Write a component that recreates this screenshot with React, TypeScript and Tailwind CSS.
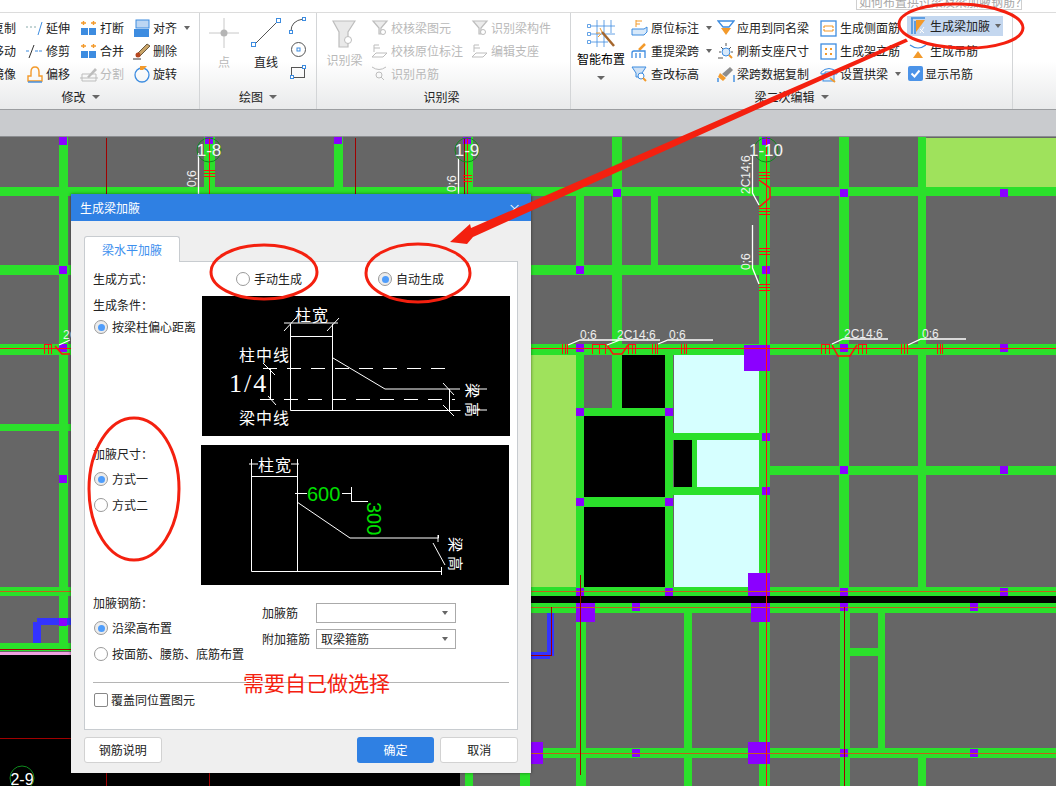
import type { ReactNode } from "react";

const BLUE = "#3d8ce0";
const ORANGE = "#f39a2b";
const GREY = "#bdbdbd";

function Ic({ w = 18, h = 18, children }: { w?: number; h?: number; children: ReactNode }) {
  return (
    <svg width={w} height={h} viewBox={`0 0 ${w} ${h}`} fill="none" className="shrink-0">
      {children}
    </svg>
  );
}

function Caret() {
  return <span className="ml-[5px] inline-block h-0 w-0 border-x-[3px] border-t-[4px] border-x-transparent border-t-[#666]" />;
}

function Item({ icon, label, off, caret, w }: { icon?: ReactNode; label: string; off?: boolean; caret?: boolean; w?: string }) {
  return (
    <div className={`flex h-[23px] items-center gap-[2px] whitespace-nowrap ${w ?? ""} ${off ? "text-[#b9b9b9]" : "text-[#222]"}`}>
      {icon}
      <span>{label}</span>
      {caret && <Caret />}
    </div>
  );
}

const icons = {
  copy: <Ic><rect x="2" y="2" width="10" height="10" stroke={BLUE} /></Ic>,
  extend: (
    <Ic>
      <path d="M0 8H11" stroke="#8aa" strokeDasharray="2 2" />
      <path d="M12 16L16 3" stroke={BLUE} />
    </Ic>
  ),
  trim: (
    <Ic>
      <path d="M0 9H4M9 9H17" stroke={BLUE} strokeDasharray="3 1" />
      <path d="M3 16L8 3" stroke="#333" />
    </Ic>
  ),
  offset: (
    <Ic>
      <path d="M2 16V11H5V7Q5 2 9 2Q13 2 13 7V11H16V16Z" stroke={ORANGE} strokeWidth="1.4" />
      <path d="M2 17H16" stroke={BLUE} strokeWidth="1.4" />
    </Ic>
  ),
  split: (
    <Ic>
      <path d="M2 16V9H16V16ZM0 13H18" stroke={GREY} />
      <path d="M7 12L15 3L17 5L9 13Z" fill={GREY} />
    </Ic>
  ),
  brk: (
    <Ic>
      <path d="M1 4H6M3.5 2V6M11 4H16M13.500 2V6" stroke={ORANGE} strokeWidth="1.4" />
      <rect x="1" y="9" width="7" height="7" fill={BLUE} />
      <rect x="9" y="9" width="7" height="7" fill={BLUE} />
    </Ic>
  ),
  merge: (
    <Ic>
      <path d="M1 4H6M3.5 2V6M11 4H16M13.500 2V6" stroke={ORANGE} strokeWidth="1.4" />
      <rect x="1" y="9" width="15" height="7" fill={BLUE} />
      <path d="M8.500 9V16" stroke="#fff" />
    </Ic>
  ),
  align: (
    <Ic>
      <rect x="3" y="1" width="13" height="8" fill="#bcd6f3" stroke={BLUE} />
      <rect x="1" y="10" width="15" height="8" fill={BLUE} />
    </Ic>
  ),
  del: (
    <Ic>
      <path d="M4 12L14 2L17 4L7 14Z" fill="#c9a468" stroke="#6b5a40" />
      <circle cx="5" cy="13" r="2.500" fill="#b5461f" />
      <path d="M0 17H8" stroke="#333" />
    </Ic>
  ),
  rotate: (
    <Ic>
      <circle cx="9" cy="10" r="7" stroke={BLUE} strokeWidth="1.3" />
      <path d="M7 1H14L10 5H7Z" fill={ORANGE} />
    </Ic>
  ),
  check: (
    <Ic w={18} h={16}>
      <path d="M2 1H16L10 8V14H8V8Z" fill="#ececec" stroke={GREY} strokeWidth="1.200" />
      <circle cx="12" cy="12" r="2.500" fill="#fff" stroke={GREY} />
    </Ic>
  ),
  orig: (
    <Ic>
      <path d="M1 15H12L16 11H5ZM3 10V3H8" stroke={GREY} />
      <path d="M3 6H9" stroke={GREY} />
    </Ic>
  ),
  hook: (
    <Ic>
      <path d="M1 2Q8 7 15 2" stroke={GREY} />
      <circle cx="8" cy="10" r="3" stroke={GREY} />
      <path d="M10 12L13 15" stroke={GREY} />
    </Ic>
  ),
  tag: (
    <Ic>
      <path d="M5 1V8M5 2H11M5 5H9" stroke={ORANGE} />
      <path d="M1 10H13L16 8V13L13 16H1Z" fill="#d8e9fa" stroke={BLUE} />
    </Ic>
  ),
  relift: (
    <Ic>
      <path d="M8 8L14 2" stroke={ORANGE} strokeWidth="2.500" />
      <path d="M1 16V11Q1 9 3 9H14V16M5 11V16M9 11V16" stroke={BLUE} strokeWidth="1.300" />
    </Ic>
  ),
  elev: (
    <Ic>
      <path d="M1 2H15L11 8V12H5V8Z" fill="#cfe2f6" stroke={BLUE} />
      <circle cx="10" cy="11" r="3" fill="#fff" stroke={BLUE} />
      <path d="M12 13L15 16" stroke={ORANGE} strokeWidth="2" />
    </Ic>
  ),
  apply: (
    <Ic>
      <path d="M1 2H17L12 8H6Z" stroke={BLUE} strokeWidth="1.300" />
      <path d="M4 9H14L9 16Z" fill={ORANGE} />
    </Ic>
  ),
  refresh: (
    <Ic>
      <circle cx="9" cy="10" r="4" fill="#d8e9fa" stroke={BLUE} />
      <path d="M9 1V4M2 10H4M14 10H16M4 5L6 7M14 5L12 7M1 16H6" stroke="#555" />
      <path d="M12 13L15 16" stroke={ORANGE} strokeWidth="2" />
    </Ic>
  ),
  span: (
    <Ic>
      <path d="M5 9L13 2L16 5L9 12Z" fill="#8d8d8d" />
      <path d="M3 8L9 13L6 16L1 12Z" fill={ORANGE} />
      <path d="M1 17V13M17 17V10" stroke={BLUE} strokeWidth="1.400" />
    </Ic>
  ),
  side: (
    <Ic>
      <rect x="1" y="2" width="15" height="15" stroke={BLUE} strokeWidth="1.300" />
      <path d="M4 7H13M4 12H13M4 7V9M13 7V9M4 10V12M13 10V12" stroke={ORANGE} strokeWidth="1.200" />
    </Ic>
  ),
  erect: (
    <Ic>
      <rect x="1" y="2" width="15" height="15" stroke={BLUE} strokeWidth="1.300" />
      <path d="M5 6H7V8H5ZM10 6H12V8H10ZM5 11H7V13H5ZM10 11H12V13H10Z" fill={ORANGE} />
    </Ic>
  ),
  arch: (
    <Ic>
      <path d="M1 7Q9 0 17 7V9H13V7H5V9H1Z" stroke={BLUE} />
      <rect x="3" y="9" width="11" height="7" fill="#d8e9fa" stroke={BLUE} />
      <path d="M10 13L15 17" stroke={ORANGE} strokeWidth="2" />
    </Ic>
  ),
  haunch: (
    <Ic w={20} h={18}>
      <path d="M1 1H15M2 1V17M5 4V17" stroke={BLUE} strokeWidth="1.500" />
      <path d="M6 3H15L6 15Z" fill={ORANGE} />
      <path d="M10 12L14 16M14 10L10 16" stroke="#fff" strokeWidth="1" />
    </Ic>
  ),
  hanger: (
    <Ic w={20} h={18}>
      <path d="M2 3Q10 9 18 3" stroke={BLUE} strokeWidth="1.200" />
      <path d="M10 9L15 16H5Z" fill={ORANGE} />
    </Ic>
  ),
  tick: (
    <span className="flex h-[15px] w-[15px] shrink-0 items-center justify-center rounded-[2px] bg-[#4b93e8]">
      <svg width="11" height="11" viewBox="0 0 11 11" fill="none">
        <path d="M1.500 5.500L4.500 8.500L9.500 2.500" stroke="#fff" strokeWidth="2" />
      </svg>
    </span>
  ),
};

function Group({ title, caret, w, labelPad, children }: { title: string; caret?: boolean; w: string; labelPad?: string; children: ReactNode }) {
  return (
    <div className={`flex shrink-0 flex-col border-r border-[#d3d5d7] ${w}`}>
      <div className="flex h-[72px] pt-[3px]">{children}</div>
      <div className={`flex h-[22px] items-center justify-center pt-[2px] text-[#222] ${labelPad ?? ""}`}>
        {title}
        {caret && <span className="ml-[6px] h-0 w-0 border-x-[4px] border-t-[4px] border-x-transparent border-t-[#666]" />}
      </div>
    </div>
  );
}

function Ribbon() {
  return (
    <div className="flex h-[97px] shrink-0 overflow-hidden border-b border-[#9b9da0] bg-gradient-to-b from-white from-50% to-[#e9eaeb]">
      <Group title="修改" caret w="w-[200px]" labelPad="pr-[38px]">
        <div className="ml-[-31px] flex w-[57px] flex-col pl-[3px]">
          <Item icon={icons.copy} label="复制" />
          <Item icon={icons.copy} label="移动" />
          <Item icon={icons.copy} label="镜像" />
        </div>
        <div className="flex w-[54px] flex-col">
          <Item icon={icons.extend} label="延伸" />
          <Item icon={icons.trim} label="修剪" />
          <Item icon={icons.offset} label="偏移" />
        </div>
        <div className="flex w-[53px] flex-col">
          <Item icon={icons.brk} label="打断" />
          <Item icon={icons.merge} label="合并" />
          <Item icon={icons.split} label="分割" off />
        </div>
        <div className="flex w-[65px] flex-col">
          <Item icon={icons.align} label="对齐" caret />
          <Item icon={icons.del} label="删除" />
          <Item icon={icons.rotate} label="旋转" />
        </div>
      </Group>
      <Group title="绘图" caret w="w-[117px]">
        <div className="flex w-[48px] flex-col items-center pt-[2px] text-[#b9b9b9]">
          <Ic w={30} h={30}>
            <path d="M15 0V30M0 15H30" stroke="#c8c8c8" />
            <circle cx="15" cy="15" r="3.500" fill="#b5b5b5" />
          </Ic>
          <span className="mt-[5px]">点</span>
        </div>
        <div className="flex w-[36px] flex-col items-center pt-[2px] text-[#222]">
          <Ic w={30} h={30}>
            <path d="M3 27L27 3" stroke="#555" />
            <rect x="0.500" y="24.500" width="4" height="4" fill="#fff" stroke={BLUE} />
            <rect x="25.500" y="0.500" width="4" height="4" fill="#fff" stroke={BLUE} />
          </Ic>
          <span className="mt-[5px]">直线</span>
        </div>
        <div className="flex flex-1 flex-col items-center gap-[7px] pr-[4px] pt-[1px]">
          <Ic w={18} h={17}>
            <path d="M2 14Q2 4 14 2" stroke="#555" />
            <rect x="0.500" y="13.500" width="3" height="3" fill="#fff" stroke={BLUE} />
            <rect x="13.500" y="0.500" width="3" height="3" fill="#fff" stroke={BLUE} />
          </Ic>
          <Ic w={17} h={17}>
            <circle cx="8.500" cy="8.500" r="7" stroke="#555" />
            <rect x="7" y="7" width="3" height="3" stroke={BLUE} />
          </Ic>
          <Ic w={16} h={14}>
            <rect x="1.500" y="2.500" width="13" height="10" stroke="#555" />
            <rect x="0.500" y="10.500" width="3" height="3" fill="#fff" stroke={BLUE} />
            <rect x="12.500" y="0.500" width="3" height="3" fill="#fff" stroke={BLUE} />
          </Ic>
        </div>
      </Group>
      <Group title="识别梁" w="w-[254px]" labelPad="pr-[4px]">
        <div className="flex w-[54px] flex-col items-center pt-[4px] text-[#b9b9b9]">
          <Ic w={24} h={28}>
            <path d="M1 1H23L16 12V27H7V12Z" fill="#e9e9e9" stroke={GREY} strokeWidth="1.200" />
            <circle cx="16" cy="20" r="3.500" fill="#fff" stroke={GREY} />
          </Ic>
          <span className="mt-[3px] pl-[1px]">识别梁</span>
        </div>
        <div className="flex w-[100px] flex-col">
          <Item icon={icons.check} label="校核梁图元" off />
          <Item icon={icons.orig} label="校核原位标注" off />
          <Item icon={icons.hook} label="识别吊筋" off />
        </div>
        <div className="flex flex-1 flex-col">
          <Item icon={icons.check} label="识别梁构件" off />
          <Item icon={icons.orig} label="编辑支座" off />
        </div>
      </Group>
      <Group title="梁二次编辑" caret w="w-[442px]">
        <div className="flex w-[60px] flex-col items-center pt-[3px]">
          <Ic w={30} h={30}>
            <path d="M5 7H29M5 15H29M5 23H22M11 1V28M18 1V28M25 1V14" stroke={BLUE} strokeWidth="0.800" />
            <path d="M1.500 5.500H4.500V8.500H1.500ZM1.500 13.500H4.500V16.500H1.500ZM1.500 21.500H4.500V24.500H1.500Z" stroke={BLUE} strokeWidth="0.800" />
            <path d="M16 13L28 27" stroke="#a5662c" strokeWidth="2.500" />
            <path d="M14 9L16 13M10 14H14M12 18L15 15" stroke={ORANGE} />
          </Ic>
          <span className="mt-[1px] whitespace-nowrap">智能布置</span>
          <span className="mt-[8px] h-0 w-0 border-x-[4px] border-t-[4px] border-x-transparent border-t-[#666]" />
        </div>
        <div className="flex w-[86px] flex-col">
          <Item icon={icons.tag} label="原位标注" caret />
          <Item icon={icons.relift} label="重提梁跨" caret />
          <Item icon={icons.elev} label="查改标高" />
        </div>
        <div className="flex w-[103px] flex-col">
          <Item icon={icons.apply} label="应用到同名梁" />
          <Item icon={icons.refresh} label="刷新支座尺寸" />
          <Item icon={icons.span} label="梁跨数据复制" />
        </div>
        <div className="flex w-[87px] flex-col">
          <Item icon={icons.side} label="生成侧面筋" />
          <Item icon={icons.erect} label="生成架立筋" />
          <Item icon={icons.arch} label="设置拱梁" caret />
        </div>
        <div className="flex flex-1 flex-col">
          <div className="flex h-[20px] w-[96px] items-center bg-[#c4d7ef] pl-[3px] text-[#222]">
            {icons.haunch}
            <span className="whitespace-nowrap">生成梁加腋</span>
            <Caret />
          </div>
          <div className="mt-[3px] pl-[1px]">
            <Item icon={icons.hanger} label="生成吊筋" />
          </div>
          <div className="pl-[1px]">
            <Item icon={icons.tick} label="显示吊筋" />
          </div>
        </div>
      </Group>
    </div>
  );
}

const GREEN = "#2be02b";
const beams: number[][] = [
  [0, 187, 1056, 9], [0, 265, 760, 10], [0, 344, 1056, 11], [0, 424, 71, 7], [0, 587, 1056, 9],
  [0, 643, 71, 8], [770, 466, 286, 9], [584, 497, 81, 10], [584, 408, 81, 8], [673, 433, 88, 7], [673, 487, 88, 8],
  [500, 603, 556, 10], [470, 748, 586, 10], [850, 648, 28, 8],
  [59, 137, 9, 508], [204, 137, 11, 52], [334, 137, 9, 52], [464, 137, 9, 52],
  [612, 137, 10, 271], [576, 189, 8, 78], [651, 189, 7, 78], [576, 344, 8, 252], [665, 344, 8, 252],
  [759, 137, 11, 649], [839, 137, 10, 459], [918, 137, 8, 459], [840, 613, 10, 173], [878, 613, 7, 135],
  [918, 748, 8, 38], [576, 613, 10, 173], [684, 613, 8, 173], [761, 613, 9, 173], [465, 655, 8, 131], [520, 655, 10, 131],
  [692, 440, 5, 47],
];
const smallNodes: number[][] = [
  [63, 141], [63, 270], [63, 348], [63, 479], [63, 622], [209, 140], [338, 140], [467, 140], [617, 193], [844, 193], [1004, 193],
  [580, 270], [766, 270], [580, 348], [844, 348], [1004, 348], [580, 412], [669, 412], [766, 437], [766, 141], [844, 470], [1004, 470],
  [766, 491], [580, 502], [669, 502], [580, 592], [669, 592], [844, 592], [1004, 592], [636, 607], [844, 607], [974, 607],
  [636, 753], [844, 753], [974, 753],
];
const bigNodes: number[][] = [
  [744, 345, 26, 26], [748, 573, 22, 23], [576, 603, 19, 19], [751, 603, 19, 19], [531, 742, 12, 22], [748, 742, 22, 22],
];
// x, width of the stirrup marks on the long beam; wide ones carry a top bar
const hTicks: number[][] = [[562, 6], [592, 14], [628, 8], [652, 6], [681, 6], [821, 9], [858, 9], [901, 7], [937, 6], [44, 8]];
const vTicks: number[][] = [[204, 170, 11], [463, 175, 9], [759, 172, 11], [759, 208, 11], [759, 248, 11], [759, 284, 11]];
const labels: [number, number, string][] = [
  [580, 339, "0;6"], [617, 339, "2C14;6"], [669, 339, "0;6"], [844, 338, "2C14;6"], [922, 338, "0;6"], [63, 339, "2C"],
];
const rotated: [number, number, string][] = [
  [196, 187, "0;6"], [456, 192, "0;6"], [750, 194, "2C14;6"], [750, 270, "0;6"],
];
const axes: [number, string][] = [[209, "1-8"], [467, "1-9"], [766, "1-10"]];

function Cad() {
  return (
    <svg viewBox="0 137 1056 649" className="block h-full w-full bg-[#666666]">
      <g shapeRendering="crispEdges" fill="none">
        <rect x="926" y="138" width="130" height="49" fill="#9fe25c" />
        <rect x="531" y="354" width="45" height="233" fill="#9fe25c" />
        <path d="M674 354H761V433H674ZM697 440H761V487H697ZM674 495H761V587H674Z" fill="#d6ffff" />
        <path d="M622 354H665V408H622ZM584 416H665V497H584ZM584 507H665V587H584ZM674 440H692V487H674Z" fill="#000" />
        {beams.map(([x, y, w, h]) => (
          <rect key={`${x}-${y}-${w}`} x={x} y={y} width={w} height={h} fill={GREEN} />
        ))}
        <rect x="500" y="596" width="556" height="7" fill="#000" />
        <path d="M33 622H41V643H33ZM37 618H71V625H37ZM547 613H554V656H547ZM531 652H550V659H531Z" fill="#3333ff" />
        <rect x="0" y="652" width="463" height="3" fill="#f0a0e0" />
        <rect x="0" y="655" width="460" height="131" fill="#000" />
        {smallNodes.map(([x, y]) => (
          <rect key={`${x}-${y}`} x={x - 4} y={y - 4} width="8" height="8" fill="#8b00ff" />
        ))}
        {bigNodes.map(([x, y, w, h]) => (
          <rect key={`${x}-${y}`} x={x} y={y} width={w} height={h} fill="#8b00ff" />
        ))}
        <path d="M0 348.500H1056" stroke="#ff1010" />
        <path d="M0 591.500H1056M500 607.500H1056M470 753.500H1056" stroke="#c2601a" strokeWidth="1.500" />
        <path d="M0 649.500H71M0 738.500H71M106.500 138V194M355.500 138V194M464.500 138V194M106.500 773V786M209.500 773V786" stroke="#a00000" />
        <path d="M580.500 575V775M844.500 607V786M551.500 607V655.500H531" stroke="#a00000" />
        <path d="M209.500 138V194M467.500 138V194M766.500 137V786" stroke="#ff1010" />
        {hTicks.map(([x, w]) => (
          <path
            key={x}
            d={`${w >= 8 ? `M${x} 344.500H${x + w}` : ""}M${x + 0.5} 344V354M${x + Math.floor(w / 2) + 0.5} 344V354M${x + w - 0.5} 344V354`}
            stroke="#ff1010"
          />
        ))}
        {vTicks.map(([x, y, w]) => (
          <path key={`${x}-${y}`} d={`M${x} ${y + 0.5}H${x + w}M${x} ${y + 3.5}H${x + w}M${x} ${y + 6.5}H${x + w}`} stroke="#ff1010" strokeWidth="1.300" />
        ))}
      </g>
      <path d="M607 345L613 354H622L628 345M832 345L838 356H850L857 345M55 346L62 354H70M759 180L770 188V198L759 207" stroke="#ff1010" strokeWidth="1.500" fill="none" />
      <path d="M568 345L580 340H660M607 345L620 340M658 344L668 340H713M832 344L843 339H888M908 345L921 339H966M59 345L70 340M198.500 153V194M458.500 158V194M752.500 155V193L759 205M752.500 225V268L759 284" stroke="#fff" strokeWidth="1.300" fill="none" />
      {axes.map(([x, t]) => (
        <g key={t}>
          <circle cx={x} cy="150" r="12" stroke="#0f8a1d" fill="none" />
          <text x={x} y="156" textAnchor="middle" fill="#f2f2f2" fontSize="17" fontFamily="Liberation Sans, sans-serif">{t}</text>
        </g>
      ))}
      <circle cx="22" cy="778" r="12" stroke="#0f8a1d" fill="none" />
      <text x="22" y="785" textAnchor="middle" fill="#fff" fontSize="16" fontFamily="Liberation Sans, sans-serif">2-9</text>
      {labels.map(([x, y, t]) => (
        <text key={`${x}-${t}`} x={x} y={y} fill="#eee" fontSize="12" fontFamily="Liberation Sans, sans-serif">{t}</text>
      ))}
      {rotated.map(([x, y, t]) => (
        <text key={`${x}-${y}`} transform={`translate(${x} ${y}) rotate(-90)`} fill="#eee" fontSize="12" fontFamily="Liberation Sans, sans-serif">{t}</text>
      ))}
    </svg>
  );
}

function Radio({ on, label }: { on?: boolean; label: string }) {
  return (
    <div className="flex h-[18px] items-center gap-[4px] whitespace-nowrap">
      <span className={`flex h-[14px] w-[14px] shrink-0 items-center justify-center rounded-full border border-[#9a9a9a] ${on ? "bg-[#ececec]" : "bg-white"}`}>
        {on && <span className="h-[7px] w-[7px] rounded-full bg-[#4f9dfb]" />}
      </span>
      <span>{label}</span>
    </div>
  );
}

function Select({ value }: { value?: string }) {
  return (
    <div className="flex h-[20px] w-[140px] items-center justify-between border border-[#aaa] bg-white pl-[4px] pr-[7px]">
      <span>{value}</span>
      <span className="h-0 w-0 border-x-[3px] border-t-[4px] border-x-transparent border-t-[#666]" />
    </div>
  );
}

const cjk = { fontFamily: "Noto Sans CJK SC, sans-serif" };

function DiagramOne() {
  return (
    <svg width="308" height="140" viewBox="0 0 308 140" className="ml-px block bg-black" stroke="#fff" fill="none">
      <path d="M88.500 28V114.500M130.500 28V114.500M88.500 40.500H130.500M88.500 114.500H258.500M131 62L183 93H258M82 27H136M82 35L94 22M125 35L137 22" />
      <path d="M61 72.500H253M58 103.500H253" strokeDasharray="14 10" />
      <path d="M68.500 72V103M61 67L73 79M66 100L74 109M247.500 93V114M241 87L252 99M241 109L252 120M265 93H285M265 114H285" />
      <g fill="#fff" stroke="none" style={cjk}>
        <text x="93" y="25" fontSize="16" letterSpacing="1">柱宽</text>
        <text x="37" y="65" fontSize="16" letterSpacing="1">柱中线</text>
        <text x="37" y="128" fontSize="16" letterSpacing="1">梁中线</text>
        <text x="27" y="96" fontSize="26" letterSpacing="2" style={{ fontFamily: "Liberation Serif, serif" }}>1/4</text>
        <text transform="translate(265 87) rotate(90)" fontSize="15" letterSpacing="4">梁高</text>
      </g>
    </svg>
  );
}

function DiagramTwo() {
  return (
    <svg width="308" height="140" viewBox="0 0 308 140" className="block bg-black" stroke="#fff" fill="none">
      <path d="M50.500 14V126.500H240.500M96.500 14V126.500M50.500 31.500H96.500M48 19H57M90 19H98M94 48.500H106M141 48.500H150.500V56.500H167M150.500 42V56.500M96 57L149 93H237.500V90M237 90V97M232 98L244 120M240.500 122V130" />
      <g fill="#fff" stroke="none" style={cjk}>
        <text x="57" y="26" fontSize="16" letterSpacing="1">柱宽</text>
        <text transform="translate(249 92) rotate(90)" fontSize="15" letterSpacing="4">梁高</text>
      </g>
      <g fill="#00e000" stroke="none" fontSize="20" style={{ fontFamily: "Liberation Sans, sans-serif" }}>
        <text x="106" y="56">600</text>
        <text transform="translate(166 57) rotate(90)">300</text>
      </g>
    </svg>
  );
}

function Dialog() {
  return (
    <div className="absolute left-[71px] top-[57px] flex h-[579px] w-[460px] flex-col bg-[#efefef] shadow-[0_0_3px_rgba(0,0,0,0.5)]">
      <div className="flex h-[27px] shrink-0 items-center justify-between bg-[#2f80e3] pl-[9px] pr-[10px] text-white">
        <span>生成梁加腋</span>
        <span className="text-[13px] leading-none">×</span>
      </div>
      <div className="flex flex-1 flex-col px-[13px] pt-[15px]">
        <div className="z-10 -mb-px flex h-[26px] w-[96px] items-center justify-center rounded-t-[3px] border border-b-0 border-[#c8ccd0] bg-white text-[#3d8fee]">
          梁水平加腋
        </div>
        <div className="h-[469px] border border-[#c8ccd0] bg-white pl-[8px] pt-[8px] text-[#222]">
          <div className="flex h-[18px] items-center">
            <span className="w-[143px]">生成方式：</span>
            <div className="w-[142px]"><Radio label="手动生成" /></div>
            <Radio on label="自动生成" />
          </div>
          <div className="mt-[8px] flex">
            <div className="flex w-[108px] shrink-0 flex-col pl-px">
              <span className="-ml-px h-[18px] leading-[18px]">生成条件：</span>
              <div className="mt-[4px]"><Radio on label="按梁柱偏心距离" /></div>
              <span className="-ml-px mt-[109px] h-[18px] leading-[18px]">加腋尺寸：</span>
              <div className="mt-[7px]"><Radio on label="方式一" /></div>
              <div className="mt-[8px]"><Radio label="方式二" /></div>
            </div>
            <div className="flex flex-col gap-[9px]">
              <DiagramOne />
              <DiagramTwo />
            </div>
          </div>
          <div className="flex">
            <div className="w-[169px] shrink-0 pl-px pt-[9px]">
              <span className="-ml-px block h-[18px] leading-[18px]">加腋钢筋：</span>
              <div className="mt-[7px]"><Radio on label="沿梁高布置" /></div>
              <div className="mt-[8px]"><Radio label="按面筋、腰筋、底筋布置" /></div>
            </div>
            <div className="flex flex-col gap-[6px] pt-[18px]">
              <div className="flex items-center">
                <span className="w-[54px]">加腋筋</span>
                <Select />
              </div>
              <div className="flex items-center">
                <span className="w-[54px]">附加箍筋</span>
                <Select value="取梁箍筋" />
              </div>
            </div>
          </div>
          <div className="mt-[19px] h-px w-[416px] bg-[#b5b5b5]" />
          <div className="mt-[8px] flex h-[18px] items-center gap-[3px] pl-px">
            <span className="h-[14px] w-[14px] rounded-[2px] border border-[#888] bg-white" />
            <span>覆盖同位置图元</span>
          </div>
        </div>
        <div className="mt-[7px] flex h-[26px] items-stretch">
          <button className="w-[78px] rounded-[3px] border border-[#d2d2d2] bg-white text-[#222]">钢筋说明</button>
          <button className="ml-[195px] w-[78px] rounded-[3px] bg-[#2f80e3] text-white">确定</button>
          <button className="ml-[6px] w-[78px] rounded-[3px] border border-[#d2d2d2] bg-white text-[#222]">取消</button>
        </div>
      </div>
    </div>
  );
}

function Notes() {
  return (
    <svg viewBox="0 0 1056 786" className="pointer-events-none absolute inset-0 h-[786px] w-[1056px]" fill="none" stroke="#f4200f" strokeWidth="3">
      <ellipse cx="961" cy="26" rx="62" ry="22" transform="rotate(2 961 26)" />
      <ellipse cx="264" cy="272" rx="53" ry="27" />
      <ellipse cx="418" cy="273" rx="52" ry="29" />
      <ellipse cx="134" cy="489" rx="45" ry="71" />
      <polygon points="906,38.500 471,228 470,224 450,242 467,244 473,237 908,41.500" fill="#f4200f" stroke="none" />
      <text x="243" y="691" fill="#f4200f" stroke="none" fontSize="21" style={cjk}>需要自己做选择</text>
    </svg>
  );
}

export default function App() {
  return (
    <div className="relative flex h-[786px] w-[1056px] flex-col overflow-hidden bg-white font-['Noto_Sans_CJK_SC',sans-serif] text-[12px] leading-[18px]">
      <div className="flex h-[13px] shrink-0 justify-end border-b border-[#dcdcdc] pr-[34px]">
        <div className="h-[10px] w-[166px] overflow-hidden border-x border-b border-[#cfcfcf] pl-[2px] text-[#a8a8a8]">
          <div className="mt-[-7px] whitespace-nowrap">如何布置拱过梁及梁加腋钢筋？</div>
        </div>
      </div>
      <Ribbon />
      <div className="h-[27px] shrink-0 border-b border-[#8b8d90] bg-[#c9cbce]" />
      <div className="relative min-h-0 flex-1">
        <Cad />
        <Dialog />
      </div>
      <Notes />
    </div>
  );
}
